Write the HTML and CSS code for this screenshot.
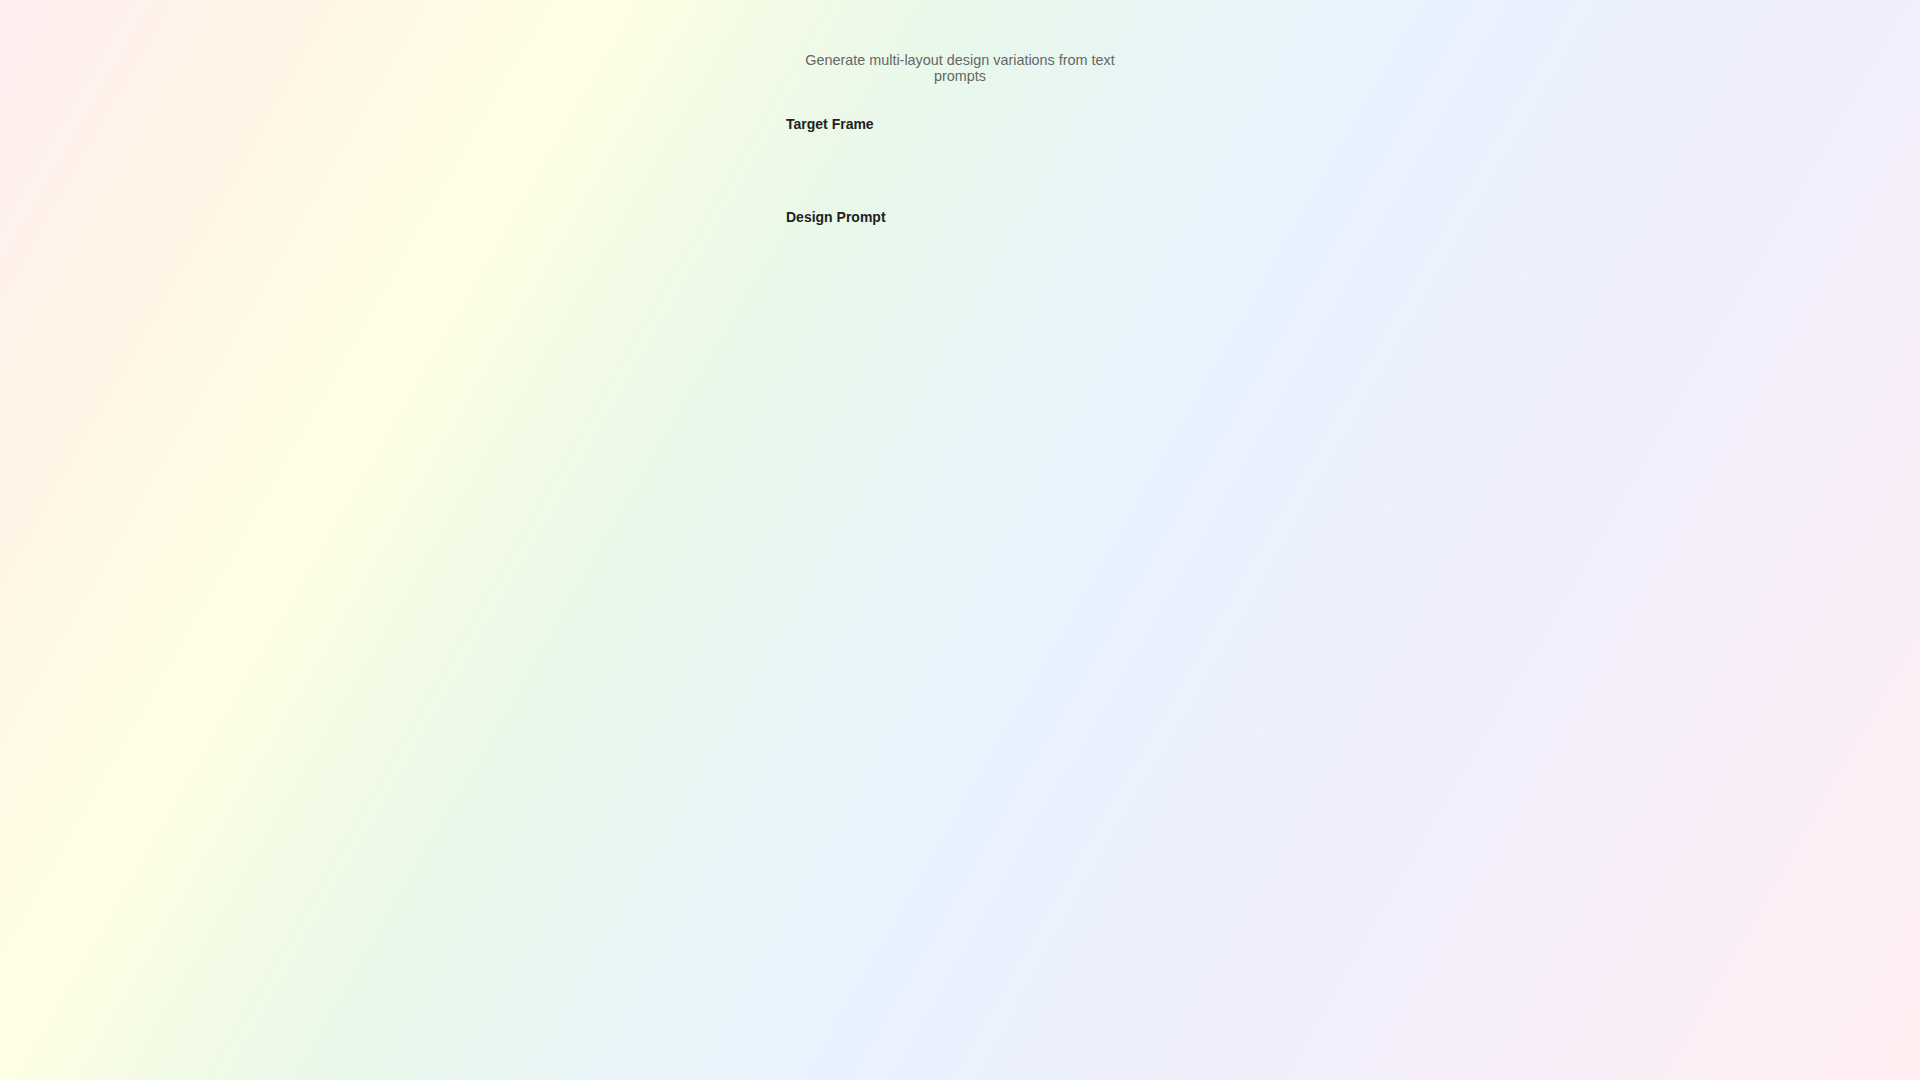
FILE: index.html
```html
<!DOCTYPE html>
<html lang="en">
<head>
<meta charset="utf-8">
<title>Design Variations</title>
<link rel="stylesheet" href="styles.css">
</head>
<body>
<main class="panel">
  <p class="subtitle">Generate multi-layout design variations from text prompts</p>
  <section class="field">
    <label class="field-label">Target Frame</label>
    <div class="frame-select"></div>
  </section>
  <section class="field">
    <label class="field-label">Design Prompt</label>
    <div class="prompt-area"></div>
  </section>
</main>
</body>
</html>
```
FILE: styles.css
```css
html, body {
  margin: 0;
  padding: 0;
}

body {
  min-height: 100vh;
  font-family: "Liberation Sans", Arial, sans-serif;
  background: linear-gradient(120deg,
    #ffeef0 0%,
    #fff5e6 12%,
    #ffffe4 24%,
    #f2fbe6 31%,
    #e8f8ea 38.5%,
    #e8f5f6 47%,
    #e8f3ff 56%,
    #edf0fd 66%,
    #f2eefc 75%,
    #f8eef9 85%,
    #fdeef4 93%,
    #ffeff0 100%);
}

.panel {
  width: 348px;
  margin: 0 auto;
  padding-top: 52px;
  display: flex;
  flex-direction: column;
}

.subtitle {
  margin: 0 0 32px;
  font-size: 14.4px;
  color: #666666;
  text-align: center;
}

.field {
  display: flex;
  flex-direction: column;
}

.field-label {
  font-size: 14px;
  font-weight: bold;
  color: #222222;
}

.frame-select {
  height: 77px;
}

.prompt-area {
  height: 200px;
}
```
